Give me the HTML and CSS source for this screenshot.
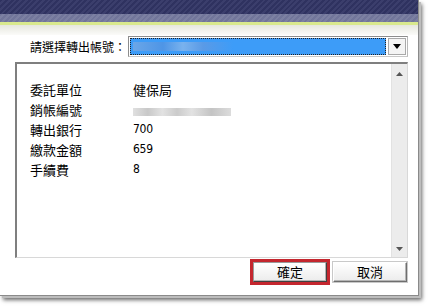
FILE: index.html
```html
<!DOCTYPE html>
<html lang="zh-Hant">
<head>
<meta charset="utf-8">
<link rel="stylesheet" href="styles.css">
</head>
<body>
<div class="dialog">
  <div class="header">
    <div class="hd-dark"></div>
    <div class="hd-mid"></div>
    <div class="hd-line"></div>
    <div class="hd-fade"></div>
  </div>
  <div class="account-row">
    <span class="acc-label">請選擇轉出帳號：</span>
    <div class="select">
      <div class="sel-value"><div class="blur-blue"></div></div>
      <div class="sel-btn"><svg width="8" height="5" viewBox="0 0 8 5"><path d="M0 0H8L4 5Z" fill="#000"/></svg></div>
    </div>
  </div>
  <div class="listbox">
    <div class="rows">
      <div class="row"><span class="k">委託單位</span><span class="v">健保局</span></div>
      <div class="row"><span class="k">銷帳編號</span><span class="v"><span class="blur-gray"></span></span></div>
      <div class="row"><span class="k">轉出銀行</span><span class="v num">700</span></div>
      <div class="row"><span class="k">繳款金額</span><span class="v num">659</span></div>
      <div class="row"><span class="k">手續費</span><span class="v num">8</span></div>
    </div>
    <div class="scrollbar">
      <svg width="7" height="4" viewBox="0 0 7 4"><path d="M0 4H7L3.5 0Z" fill="#555"/></svg>
      <svg width="7" height="4" viewBox="0 0 7 4"><path d="M0 0H7L3.5 4Z" fill="#555"/></svg>
    </div>
  </div>
  <div class="buttons">
    <div class="highlight"><button class="btn">確定</button></div>
    <button class="btn">取消</button>
  </div>
</div>
</body>
</html>
```
FILE: styles.css
```css
html, body { margin: 0; padding: 0; background: #fff; }
body { width: 431px; height: 306px; overflow: hidden; font-family: "Noto Sans CJK TC", "Liberation Sans", sans-serif; font-size: 13px; color: #000; }
.dialog { width: 419px; height: 296px; background: #fff; box-shadow: 2px 2px 0 #bdbdbd, 3px 4px 4px rgba(0,0,0,0.6); border-right: 1px solid #8a8a8a; border-bottom: 1px solid #8a8a8a; box-sizing: border-box; }
.header { display: flex; flex-direction: column; }
.hd-dark { height: 14px; background: repeating-linear-gradient(135deg, #2f3260 0 2px, #3b3e6c 2px 4px); }
.hd-mid { height: 8px; background: repeating-linear-gradient(135deg, #71759a 0 2px, #7c80a2 2px 4px); }
.hd-line { height: 3px; background: #d9e98d; }
.hd-fade { height: 10px; background: linear-gradient(#e6e7de, #fbfbf9); }
.account-row { display: flex; align-items: center; height: 21px; margin-top: 1px; }
.acc-label { width: 98px; flex: none; padding-left: 30px; white-space: nowrap; font-size: 12px; }
.select { display: flex; width: 280px; height: 21px; box-sizing: border-box; border: 1px solid #8d8d8d; border-right-color: #b8b8b8; border-bottom-color: #c8c8c8; background: #fff; padding: 1px; }
.sel-value { flex: 1; background: #3d9cf8; outline: 1px dotted #222; outline-offset: -1px; display: flex; align-items: center; }
.blur-blue { width: 100px; height: 9px; margin-left: 3px; background: linear-gradient(90deg, #6aa6e8, #4e95e6 30%, #79b2ee 50%, #5a9ae6 70%, #3d9cf8); }
.sel-btn { width: 16px; margin-left: 2px; background: #f4f4f4; border: 1px solid #a9a9a9; display: flex; align-items: center; justify-content: center; }
.listbox { display: flex; margin: 5px 0 0 15px; width: 393px; height: 196px; box-sizing: border-box; border-top: 2px solid #7f7f7f; border-left: 2px solid #7f7f7f; border-right: 1px solid #d8d8d8; border-bottom: 1px solid #d8d8d8; }
.rows { flex: 1; padding: 15px 0 0 13px; }
.row { display: flex; height: 20px; align-items: center; }
.k { width: 103px; }
.v { display: flex; align-items: center; }
.num { font-family: "Liberation Sans Narrow", "DejaVu Sans Condensed", "Liberation Sans", sans-serif; font-size: 12px; letter-spacing: -0.3px; }
.blur-gray { display: inline-block; width: 98px; height: 8px; margin-top: 6px; background: linear-gradient(90deg, #e0e0e0, #c8c8c8 15%, #e2e2e2 30%, #cbcbcb 45%, #e2e2e2 60%, #c4c4c4 80%, #dcdcdc); }
.scrollbar { width: 15px; background: #ececec; border-left: 1px solid #e2e2e2; display: flex; flex-direction: column; justify-content: space-between; align-items: center; padding: 8px 0 6px; }
.buttons { display: flex; justify-content: flex-end; align-items: center; gap: 3px; padding-right: 11px; margin-top: 1px; }
.highlight { border: 3px solid #c4262e; padding: 0; display: flex; }
.btn { width: 74px; height: 20px; margin: 0; padding: 0; font-family: "Noto Sans CJK TC", sans-serif; font-size: 13px; line-height: 16px; color: #000; background: linear-gradient(#ffffff, #ececec); border: 1px solid; border-color: #fff #6e6e6e #6e6e6e #fff; box-shadow: inset -1px -1px 0 #b5b5b5, 0 0 0 1px #c9c9c9; }
.highlight .btn { box-shadow: inset -1px -1px 0 #b5b5b5; border-color: #9a9a9a #404040 #404040 #9a9a9a; }
```
